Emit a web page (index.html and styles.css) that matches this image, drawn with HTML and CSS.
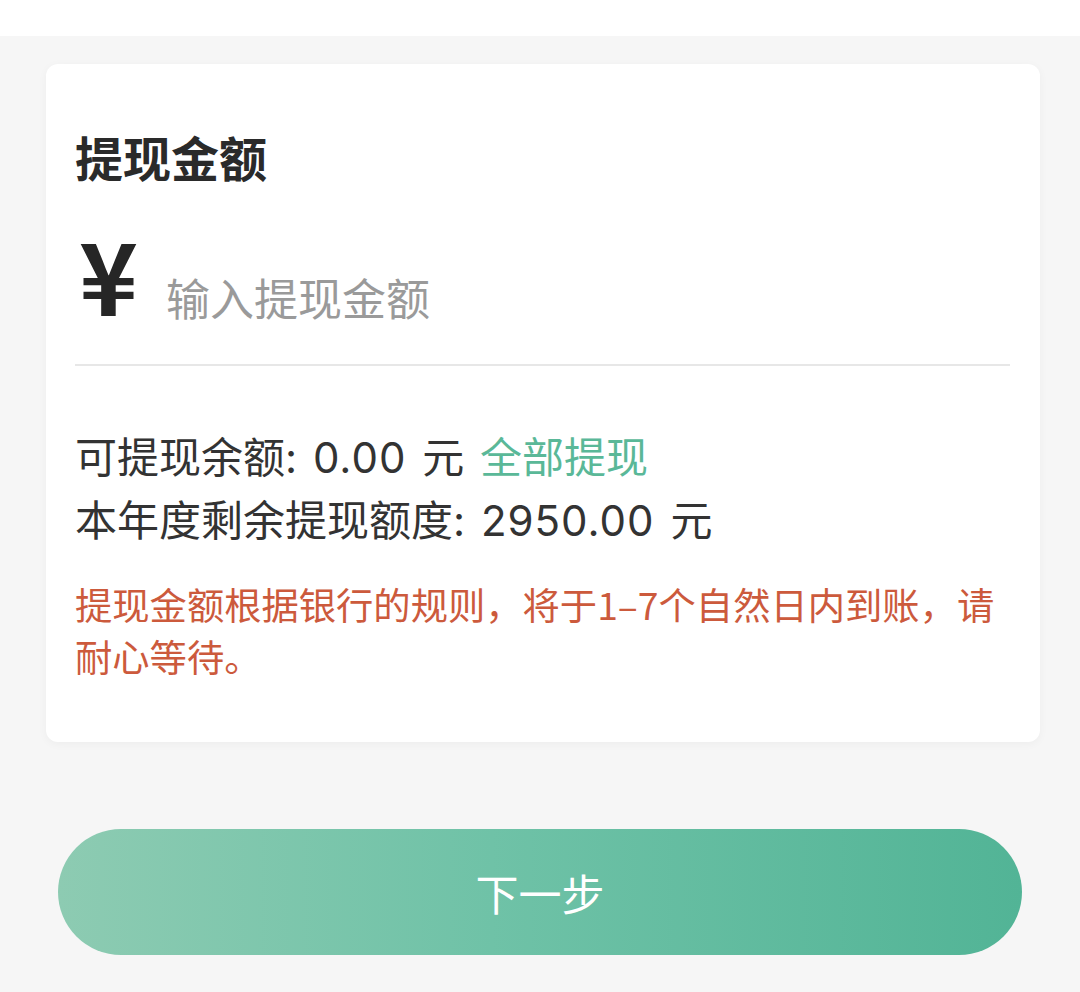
FILE: index.html
```html
<!DOCTYPE html>
<html lang="zh-CN">
<head>
<meta charset="utf-8">
<title>提现</title>
<link rel="stylesheet" href="styles.css">
</head>
<body>
<div class="topbar"></div>
<main class="page">
  <section class="card">
    <h1 class="title">提现金额</h1>
    <div class="amount-row">
      <span class="yen">¥</span>
      <span class="placeholder">输入提现金额</span>
    </div>
    <div class="info">
      <p class="line">可提现余额: <span class="num">0.00</span> 元 <span class="link">全部提现</span></p>
      <p class="line">本年度剩余提现额度: <span class="num">2950.00</span> 元</p>
    </div>
    <p class="notice">提现金额根据银行的规则，将于1–7个自然日内到账，请耐心等待。</p>
  </section>
  <button class="next">下一步</button>
</main>
</body>
</html>
```

FILE: styles.css
```css
html, body {
  margin: 0;
  padding: 0;
}
body {
  background: #f6f6f6;
  font-family: "Noto Sans CJK SC", "Noto Sans", sans-serif;
  width: 1080px;
  height: 992px;
  overflow: hidden;
}
.topbar {
  height: 36px;
  background: #ffffff;
}
.page {
  display: flex;
  flex-direction: column;
  padding: 28px 40px 0 46px;
}
.card {
  background: #ffffff;
  border-radius: 12px;
  box-shadow: 0 2px 10px rgba(0, 0, 0, 0.04);
  padding: 62px 30px 0 29px;
  height: 678px;
  box-sizing: border-box;
}
.title {
  margin: 0;
  font-size: 48px;
  font-weight: 700;
  line-height: 60px;
  color: #2a2a2a;
}
.amount-row {
  display: flex;
  align-items: baseline;
  gap: 28px;
  margin-top: 28px;
  padding-left: 4px;
  height: 152px;
  border-bottom: 2px solid #e7e7e7;
  box-sizing: border-box;
}
.yen {
  font-size: 100px;
  font-weight: 700;
  line-height: 118px;
  color: #262626;
}
.placeholder {
  font-size: 44px;
  line-height: 60px;
  color: #9a9a9a;
}
.info {
  margin-top: 60px;
}
.line {
  margin: 0;
  font-family: Inter, "Noto Sans CJK SC", sans-serif;
  font-size: 42px;
  line-height: 63px;
  word-spacing: 4px;
  color: #333333;
}
.num {
  letter-spacing: 1px;
}
.link {
  color: #5ab898;
}
.notice {
  margin: 26px -20px 0 0;
  font-size: 37.3px;
  line-height: 52px;
  color: #cc5a3c;
}
.next {
  margin-top: 87px;
  margin-left: 12px;
  width: 964px;
  height: 126px;
  border: none;
  border-radius: 63px;
  background: linear-gradient(to right, #8dcbb2 0%, #6fc2a7 45%, #52b496 100%);
  color: #ffffff;
  font-family: "Noto Sans CJK SC", "Noto Sans", sans-serif;
  font-size: 43px;
  font-weight: 400;
  padding: 0;
}
```
